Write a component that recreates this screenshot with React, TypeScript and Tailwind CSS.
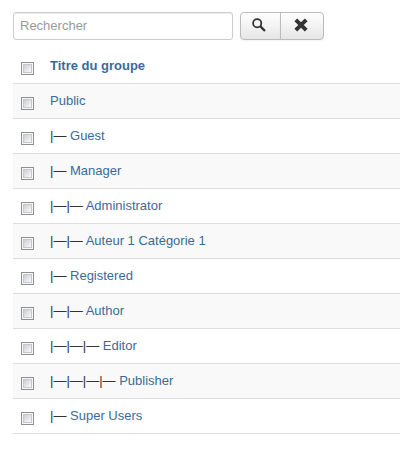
import React from 'react';

interface Group {
  id: number;
  title: string;
  level: number;
}

const groups: Group[] = [
  { id: 1, title: 'Public', level: 0 },
  { id: 2, title: 'Guest', level: 1 },
  { id: 3, title: 'Manager', level: 1 },
  { id: 4, title: 'Administrator', level: 2 },
  { id: 5, title: 'Auteur 1 Catégorie 1', level: 2 },
  { id: 6, title: 'Registered', level: 1 },
  { id: 7, title: 'Author', level: 2 },
  { id: 8, title: 'Editor', level: 3 },
  { id: 9, title: 'Publisher', level: 4 },
  { id: 10, title: 'Super Users', level: 1 },
];

const Checkbox: React.FC<{
  label: string;
  checked: boolean;
  onChange: () => void;
}> = ({ label, checked, onChange }) => (
  <input
    type="checkbox"
    aria-label={label}
    checked={checked}
    onChange={onChange}
    className="mt-[5px] block size-[13px] appearance-none border border-[#8e8f8f] bg-linear-to-br from-[#cbcfd5] from-20% to-[#f9f9f9] to-80% shadow-[inset_0_0_0_1px_#f8f8f8,inset_0_0_0_2px_#c6c8cb] checked:from-[#3071a9] checked:to-[#3071a9]"
  />
);

const SearchIcon = () => (
  <svg viewBox="0 0 14 14" className="size-[14px]" fill="none" stroke="#333" aria-hidden="true">
    <circle cx="5.2" cy="5.2" r="4.1" strokeWidth="1.8" />
    <path d="M8.4 8.4 13 13" strokeWidth="2.3" />
  </svg>
);

const ClearIcon = () => (
  <svg viewBox="0 0 14 14" className="size-[14px]" fill="none" stroke="#333" aria-hidden="true">
    <path d="M1.8 1.8 12.2 12.2M12.2 1.8 1.8 12.2" strokeWidth="3.9" />
  </svg>
);

export default function App() {
  const [search, setSearch] = React.useState('');
  const [selected, setSelected] = React.useState<number[]>([]);

  const allSelected = selected.length === groups.length;

  const toggle = (id: number) =>
    setSelected(selected.includes(id) ? selected.filter(s => s !== id) : [...selected, id]);

  return (
    <div className="pt-3 pl-[13px] font-['Liberation_Sans',Arial,sans-serif] text-[13px] leading-[18px] text-[#333]">
      <form className="mb-[9px] flex" onSubmit={e => e.preventDefault()}>
        <input
          type="text"
          aria-label="Rechercher"
          placeholder="Rechercher"
          value={search}
          onChange={e => setSearch(e.target.value)}
          className="mr-[7px] h-7 w-[220px] rounded-[3px] border border-[#ccc] bg-white px-1.5 pb-0.5 text-[#555] shadow-[inset_0_1px_1px_rgba(0,0,0,0.075)] placeholder:text-[#999]"
        />
        <button
          type="submit"
          aria-label="Rechercher"
          className="flex h-7 items-center rounded-l-[4px] border border-[#bbb] bg-linear-to-b from-white to-[#e6e6e6] pr-3.5 pb-0.5 pl-[11px] shadow-[0_1px_2px_rgba(0,0,0,0.05)]"
        >
          <SearchIcon />
        </button>
        <button
          type="button"
          aria-label="Effacer"
          onClick={() => setSearch('')}
          className="-ml-px flex h-7 items-center rounded-r-[4px] border border-[#bbb] bg-linear-to-b from-white to-[#e6e6e6] pr-[15px] pb-0.5 pl-[13px] shadow-[0_1px_2px_rgba(0,0,0,0.05)]"
        >
          <ClearIcon />
        </button>
      </form>

      <table className="w-full">
        <thead>
          <tr>
            <th className="w-[29px] px-2 py-2 align-top">
              <Checkbox
                label="Tout sélectionner"
                checked={allSelected}
                onChange={() => setSelected(allSelected ? [] : groups.map(g => g.id))}
              />
            </th>
            <th className="p-2 text-left align-top font-bold">
              <a href="#titre" className="text-[#3b6a99]">Titre du groupe</a>
            </th>
          </tr>
        </thead>
        <tbody className="border-b border-[#ddd]">
          {groups.map(group => (
            <tr key={group.id} className="border-t border-[#ddd] odd:bg-[#f9f9f9]">
              <td className="w-[29px] px-2 py-2 align-top">
                <Checkbox
                  label={group.title}
                  checked={selected.includes(group.id)}
                  onChange={() => toggle(group.id)}
                />
              </td>
              <td className="p-2 align-top">
                {group.level > 0 && <span>{'|—'.repeat(group.level)} </span>}
                <a href={`#groupe-${group.id}`} className="text-[#3b6a99]">{group.title}</a>
              </td>
            </tr>
          ))}
        </tbody>
      </table>
    </div>
  );
}
